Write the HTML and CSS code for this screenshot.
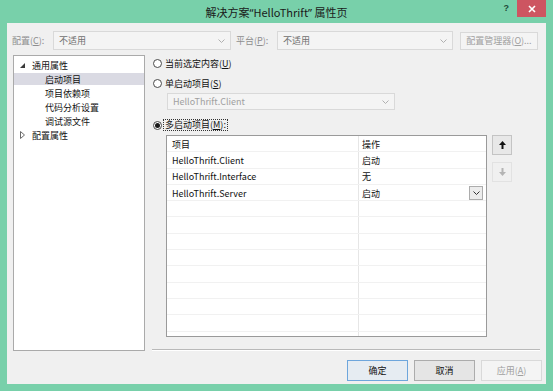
FILE: index.html
```html
<!DOCTYPE html>
<html lang="zh-CN">
<head>
  <meta charset="UTF-8">
  <title>解决方案属性页</title>
  <link rel="stylesheet" href="styles.css">
</head>
<body>
  <div class="window">
    <div class="titlebar">
      <div class="title">解决方案<span class="q">“</span>HelloThrift<span class="q">”</span> 属性页</div>
      <div class="caption-buttons">
        <div class="help">?</div>
        <div class="close">
          <svg width="8" height="8" viewBox="0 0 8 8"><path d="M1 1 L7 7 M7 1 L1 7" stroke="#fff" stroke-width="1.6"/></svg>
        </div>
      </div>
    </div>

    <div class="client">
      <div class="toolbar">
        <span class="lbl">配置(<u>C</u>):</span>
        <div class="combo combo-config">
          <span>不适用</span>
          <svg width="7" height="4" viewBox="0 0 7 4"><polyline points="0.5,0.5 3.5,3.5 6.5,0.5" fill="none" stroke="#b0b0b0"/></svg>
        </div>
        <span class="lbl lbl-platform">平台(<u>P</u>):</span>
        <div class="combo combo-platform">
          <span>不适用</span>
          <svg width="7" height="4" viewBox="0 0 7 4"><polyline points="0.5,0.5 3.5,3.5 6.5,0.5" fill="none" stroke="#b0b0b0"/></svg>
        </div>
        <button class="btn btn-manager" disabled>配置管理器(<u>O</u>)...</button>
      </div>

      <div class="main">
        <div class="tree">
          <div class="node">
            <span class="toggle"><svg width="5" height="5" viewBox="0 0 5 5"><path d="M5 0 V5 H0 Z" fill="#3a3a3a"/></svg></span>通用属性
          </div>
          <div class="node child selected">启动项目</div>
          <div class="node child">项目依赖项</div>
          <div class="node child">代码分析设置</div>
          <div class="node child">调试源文件</div>
          <div class="node">
            <span class="toggle"><svg width="5" height="8" viewBox="0 0 5 8"><path d="M0.5 0.5 L4.5 4 L0.5 7.5 Z" fill="none" stroke="#6a6a6a"/></svg></span>配置属性
          </div>
        </div>

        <div class="panel">
          <div class="radio-row"><span class="radio"></span>当前选定内容(<u>U</u>)</div>
          <div class="radio-row row-single"><span class="radio"></span>单启动项目(<u>S</u>)</div>
          <div class="combo combo-project">
            <span>HelloThrift.Client</span>
            <svg width="7" height="4" viewBox="0 0 7 4"><polyline points="0.5,0.5 3.5,3.5 6.5,0.5" fill="none" stroke="#b0b0b0"/></svg>
          </div>
          <div class="radio-row row-multi"><span class="radio checked"></span><span class="focus">多启动项目(<u>M</u>):</span></div>

          <div class="grid-area">
            <div class="grid">
              <div class="grid-row"><div class="cell">项目</div><div class="cell">操作</div></div>
              <div class="grid-row"><div class="cell">HelloThrift.Client</div><div class="cell">启动</div></div>
              <div class="grid-row"><div class="cell">HelloThrift.Interface</div><div class="cell">无</div></div>
              <div class="grid-row">
                <div class="cell">HelloThrift.Server</div>
                <div class="cell cell-combo">启动
                  <span class="drop"><svg width="7" height="4" viewBox="0 0 7 4"><polyline points="0.5,0.5 3.5,3.5 6.5,0.5" fill="none" stroke="#333"/></svg></span>
                </div>
              </div>
              <div class="grid-row"><div class="cell"></div><div class="cell"></div></div>
              <div class="grid-row"><div class="cell"></div><div class="cell"></div></div>
              <div class="grid-row"><div class="cell"></div><div class="cell"></div></div>
              <div class="grid-row"><div class="cell"></div><div class="cell"></div></div>
              <div class="grid-row"><div class="cell"></div><div class="cell"></div></div>
              <div class="grid-row"><div class="cell"></div><div class="cell"></div></div>
              <div class="grid-row"><div class="cell"></div><div class="cell"></div></div>
              <div class="grid-row"><div class="cell"></div><div class="cell"></div></div>
              <div class="grid-row"><div class="cell"></div><div class="cell"></div></div>
            </div>
            <div class="movers">
              <button class="move">
                <svg width="7" height="8" viewBox="0 0 7 8"><path d="M3.5 0 L7 4 H4.5 V8 H2.5 V4 H0 Z" fill="#111"/></svg>
              </button>
              <button class="move" disabled>
                <svg width="7" height="8" viewBox="0 0 7 8"><path d="M3.5 8 L7 4 H4.5 V0 H2.5 V4 H0 Z" fill="#b4b4b4"/></svg>
              </button>
            </div>
          </div>

          <div class="separator"></div>
        </div>
      </div>

      <div class="footer">
        <button class="btn btn-default">确定</button>
        <button class="btn">取消</button>
        <button class="btn" disabled>应用(<u>A</u>)</button>
      </div>
    </div>
  </div>
</body>
</html>
```

FILE: styles.css
```css
* {
  box-sizing: border-box;
}

body {
  margin: 0;
  font-family: "Noto Sans CJK SC", "Noto Sans", sans-serif;
  font-size: 9px;
  color: #111;
  background: #78d0aa;
}

u {
  text-underline-offset: 1px;
}

.window {
  width: 553px;
  height: 391px;
  background: #78d0aa;
  display: flex;
  flex-direction: column;
}

/* title bar */
.titlebar {
  height: 23px;
  display: grid;
  grid-template-columns: 1fr auto 1fr;
  align-items: start;
}

.title {
  grid-column: 2;
  font-size: 11px;
  line-height: 24px;
  color: #1a1a1a;
  white-space: nowrap;
}

.title .q {
  font-family: "Noto Sans", sans-serif;
}

.caption-buttons {
  grid-column: 3;
  justify-self: end;
  display: flex;
  align-items: flex-start;
  padding-right: 7px;
}

.help {
  font-family: "Liberation Sans", sans-serif;
  font-weight: bold;
  font-size: 9px;
  line-height: 16px;
  color: #1d4a37;
  margin-right: 8px;
}

.close {
  width: 29px;
  height: 17px;
  background: #cd5561;
  display: flex;
  align-items: center;
  justify-content: center;
}

/* client area */
.client {
  height: 361px;
  margin: 0 7px;
  background: #f0f0f0;
  display: flex;
  flex-direction: column;
}

.toolbar {
  display: flex;
  align-items: center;
  height: 19px;
  margin-top: 8px;
  padding-left: 5px;
}

.lbl {
  width: 41px;
  color: #8e8e8e;
}

.lbl-platform {
  margin-left: 5px;
}

.combo {
  display: flex;
  align-items: center;
  justify-content: space-between;
  height: 19px;
  border: 1px solid #d9d9d9;
  background: #f4f4f4;
  padding: 0 5px 0 5px;
  color: #707070;
}

.combo-config {
  width: 178px;
}

.combo-platform {
  width: 176px;
}

.btn {
  font: inherit;
  height: 21px;
  border: 1px solid #acacac;
  background: #e5e5e5;
  color: #111;
  padding: 0;
}

.btn:disabled {
  border-color: #d9d9d9;
  background: #f4f4f4;
  color: #a0a0a0;
}

.btn-manager {
  margin-left: 7px;
  width: 78px;
  height: 18px;
  color: #7c7c7c;
}

.btn-default {
  border-color: #6ea6dc;
  background: #e6ecf2;
}

.main {
  display: flex;
  margin-top: 5px;
  height: 296px;
}

/* tree */
.tree {
  width: 132px;
  height: 296px;
  margin-left: 6px;
  border: 1px solid #aaaaaa;
  background: #fff;
  padding-top: 3px;
}

.node {
  height: 12px;
  margin-bottom: 2px;
  display: flex;
  align-items: center;
  padding-left: 6px;
  white-space: nowrap;
}

.node.child {
  padding-left: 31px;
}

.node.selected {
  background: #dadae3;
}

.toggle {
  width: 12px;
  display: flex;
  align-items: center;
}

/* right panel */
.panel {
  width: 388px;
  margin-left: 7px;
  display: flex;
  flex-direction: column;
}

.radio-row {
  display: flex;
  align-items: center;
  height: 16px;
  padding-left: 1px;
}

.row-single {
  margin-top: 4px;
}

.row-multi {
  margin-top: 7px;
}

.radio {
  width: 9px;
  height: 9px;
  border: 1px solid #4a4a4a;
  border-radius: 50%;
  background: #fff;
  margin-right: 3px;
  display: flex;
  align-items: center;
  justify-content: center;
}

.radio.checked::after {
  content: "";
  width: 5px;
  height: 5px;
  border-radius: 50%;
  background: #1a1a1a;
}

.focus {
  border: 1px dotted #333;
  margin-left: -2px;
  padding: 0 1px;
  line-height: 10px;
}

.combo-project {
  width: 228px;
  height: 17px;
  margin: 2px 0 0 15px;
  color: #a0a0a0;
}

.grid-area {
  display: flex;
  align-items: flex-start;
  margin: 2px 0 0 14px;
}

.grid {
  width: 321px;
  height: 202px;
  border: 1px solid #9a9a9a;
  background: #fff;
  overflow: hidden;
}

.grid-row {
  display: grid;
  grid-template-columns: 191px 1fr;
  height: 16.3px;
  border-bottom: 1px solid #f1f1f1;
}

.cell {
  display: flex;
  align-items: center;
  padding: 1px 0 0 5px;
  white-space: nowrap;
}

.cell + .cell {
  border-left: 1px solid #e6e6e6;
  padding-left: 3px;
}

.cell-combo {
  justify-content: space-between;
  padding-right: 3px;
}

.drop {
  width: 14px;
  height: 14px;
  margin-top: -1px;
  border: 1px solid #acacac;
  background: #ececec;
  display: flex;
  align-items: center;
  justify-content: center;
}

.movers {
  display: flex;
  flex-direction: column;
  gap: 7px;
  margin-left: 5px;
}

.move {
  width: 20px;
  height: 20px;
  padding: 0;
  border: 1px solid #c4c4c4;
  background: #e8e8e8;
  display: flex;
  align-items: center;
  justify-content: center;
}

.move:disabled {
  border-color: #e2e2e2;
  background: #f0f0f0;
}

.separator {
  margin-top: auto;
  height: 2px;
  border-top: 1px solid #b9b9b9;
  border-bottom: 1px solid #fff;
}

/* dialog buttons */
.footer {
  display: flex;
  justify-content: flex-end;
  gap: 6px;
  margin-top: 9px;
  padding-right: 4px;
}

.footer .btn {
  width: 61px;
}
```
